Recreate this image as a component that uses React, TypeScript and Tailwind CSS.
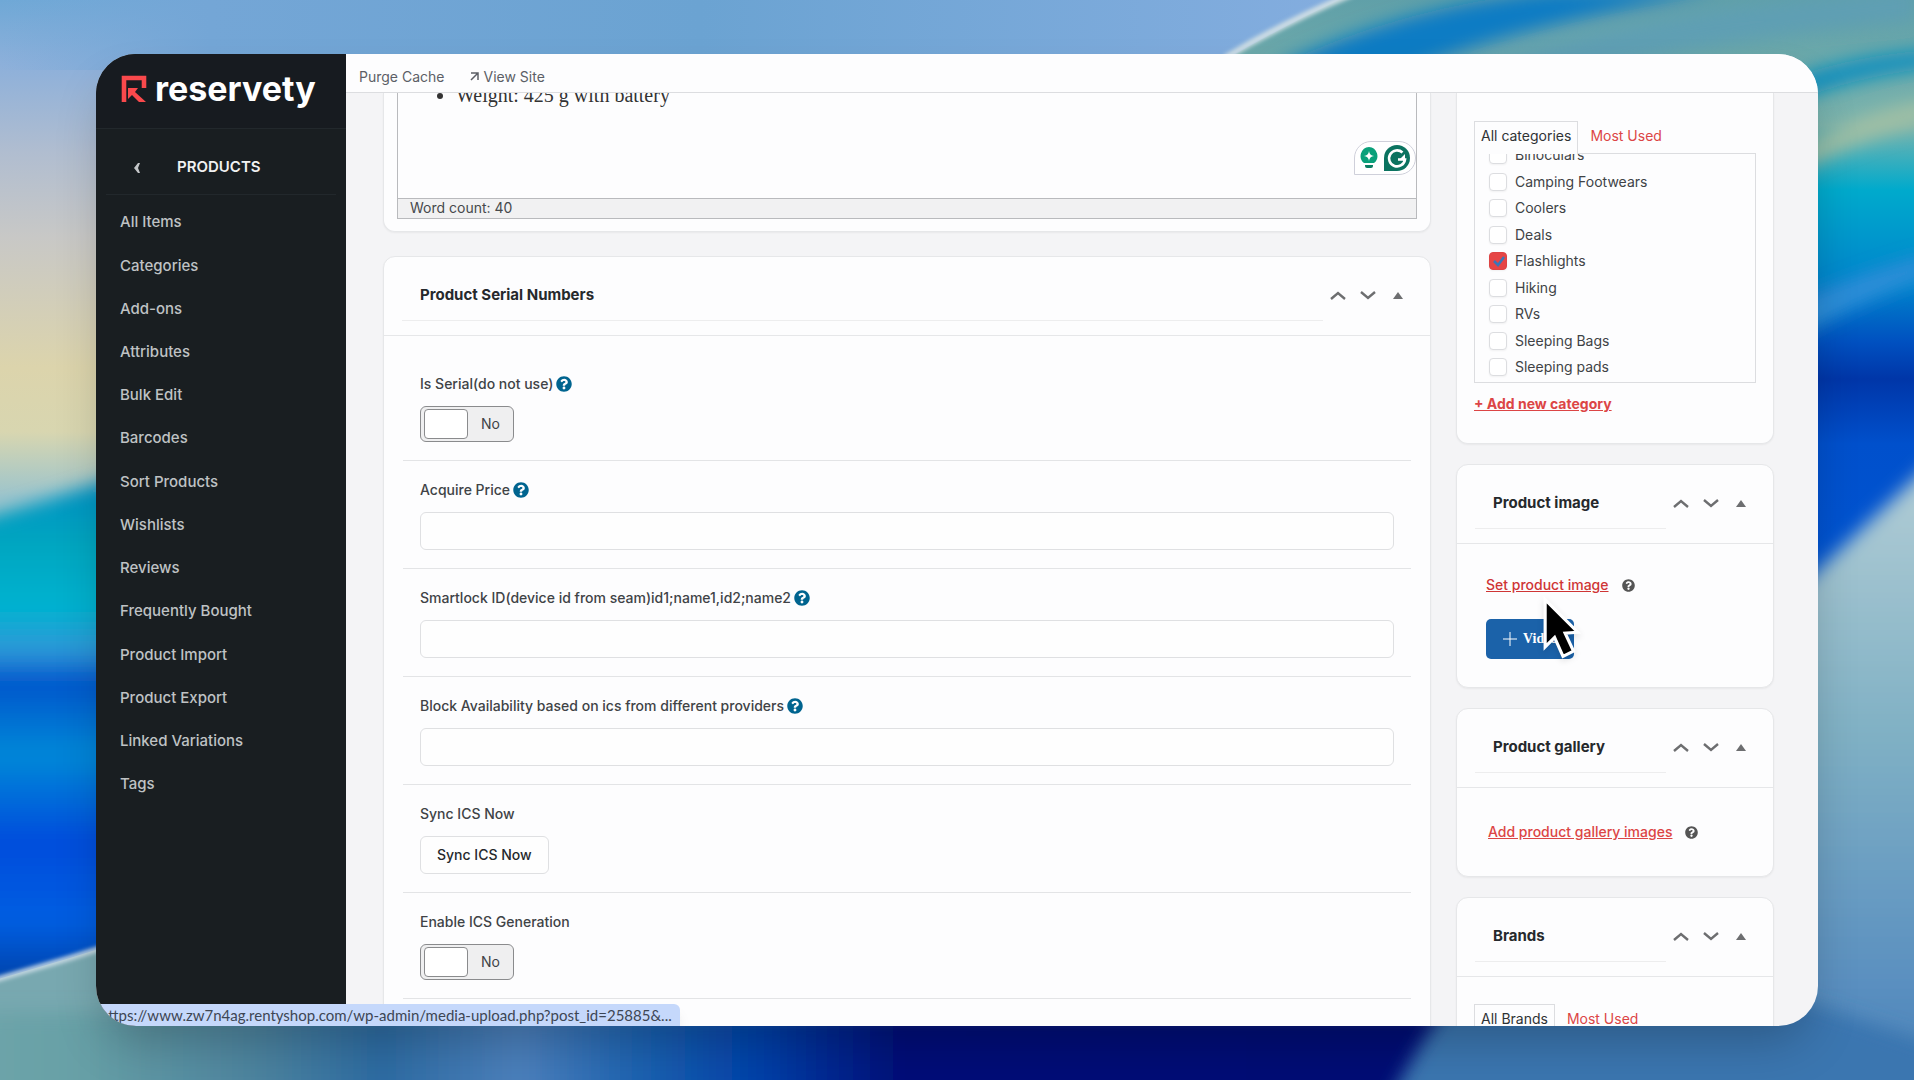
import { ReactNode } from "react";
import { FaQuestionCircle } from "react-icons/fa";

const menuItems = [
  "All Items",
  "Categories",
  "Add-ons",
  "Attributes",
  "Bulk Edit",
  "Barcodes",
  "Sort Products",
  "Wishlists",
  "Reviews",
  "Frequently Bought",
  "Product Import",
  "Product Export",
  "Linked Variations",
  "Tags",
];

const categories = [
  "Binoculars",
  "Camping Footwears",
  "Coolers",
  "Deals",
  "Flashlights",
  "Hiking",
  "RVs",
  "Sleeping Bags",
  "Sleeping pads",
];

const Wallpaper = () => (
  <svg
    className="absolute inset-0 h-full w-full"
    viewBox="0 0 1914 1080"
    preserveAspectRatio="none"
    aria-hidden="true"
  >
    <defs>
      <linearGradient id="sky" x1="0" y1="0" x2="0" y2="1">
        <stop offset="0" stopColor="#6fa8d6" />
        <stop offset="0.06" stopColor="#8db0da" />
        <stop offset="0.14" stopColor="#b0bdd0" />
        <stop offset="0.22" stopColor="#c8c8c6" />
        <stop offset="0.34" stopColor="#dcd4ac" />
        <stop offset="0.4" stopColor="#d8d6b0" />
        <stop offset="0.46" stopColor="#9cc4cc" />
      </linearGradient>
      <linearGradient id="topSky" x1="0" y1="0" x2="1" y2="0">
        <stop offset="0" stopColor="#77a8d8" stopOpacity="0" />
        <stop offset="0.15" stopColor="#74a6d6" />
        <stop offset="0.5" stopColor="#6ba3d2" />
        <stop offset="1" stopColor="#86aee0" />
      </linearGradient>
      <linearGradient id="leftWave" x1="0" y1="0" x2="0" y2="1">
        <stop offset="0" stopColor="#0a8cc4" />
        <stop offset="0.14" stopColor="#00a6c0" />
        <stop offset="0.26" stopColor="#00b2d0" />
        <stop offset="0.34" stopColor="#2f98d8" />
        <stop offset="0.4" stopColor="#0056cc" />
        <stop offset="0.54" stopColor="#0088d8" />
        <stop offset="0.7" stopColor="#004cdc" />
        <stop offset="0.85" stopColor="#005ee2" />
        <stop offset="1" stopColor="#003a98" />
      </linearGradient>
      <linearGradient id="bottom" x1="0" y1="0" x2="1" y2="0">
        <stop offset="0" stopColor="#6fa5aa" />
        <stop offset="0.06" stopColor="#67a0a6" />
        <stop offset="0.15" stopColor="#4c839f" />
        <stop offset="0.21" stopColor="#2c6ba2" />
        <stop offset="0.28" stopColor="#4c80bc" />
        <stop offset="0.34" stopColor="#1c62b0" />
        <stop offset="0.4" stopColor="#0040a8" />
        <stop offset="0.47" stopColor="#000f78" />
        <stop offset="1" stopColor="#001070" />
      </linearGradient>
      <linearGradient id="rightWave" x1="0" y1="0" x2="0" y2="1">
        <stop offset="0" stopColor="#5f9fa8" />
        <stop offset="0.18" stopColor="#79b3ad" />
        <stop offset="0.27" stopColor="#00aacc" />
        <stop offset="0.4" stopColor="#0084cc" />
        <stop offset="0.48" stopColor="#0050c0" />
        <stop offset="0.53" stopColor="#0036a8" />
        <stop offset="0.62" stopColor="#0050cc" />
        <stop offset="1" stopColor="#0058d8" />
      </linearGradient>
      <linearGradient id="rightLow" x1="0" y1="0" x2="0" y2="1">
        <stop offset="0" stopColor="#b4ced6" />
        <stop offset="0.4" stopColor="#7fb0c4" />
        <stop offset="0.75" stopColor="#5a8fc0" />
        <stop offset="1" stopColor="#3a76b0" />
      </linearGradient>
      <filter id="soft" x="-20%" y="-20%" width="140%" height="140%">
        <feGaussianBlur stdDeviation="9" />
      </filter>
      <filter id="edge" x="-5%" y="-5%" width="110%" height="110%">
        <feGaussianBlur stdDeviation="2" />
      </filter>
    </defs>

    <rect width="1914" height="1080" fill="url(#sky)" />
    <rect width="1400" height="70" fill="url(#topSky)" />
    <path d="M-40 525Q50 500 140 470V1000H-40Z" fill="url(#leftWave)" filter="url(#soft)" />
    <path d="M-20 984Q60 962 140 936V1100H-20Z" fill="#78a8b0" />
    <path d="M-20 984Q60 962 140 936" fill="none" stroke="#cbdce6" strokeWidth="5" filter="url(#edge)" />
    <rect x="-40" y="1012" width="2000" height="120" fill="url(#bottom)" filter="url(#soft)" />

    {/* right side folds */}
    <path d="M1225 60Q1290 22 1352 -6H1930V720H1700V60Z" fill="url(#rightWave)" />
    <g filter="url(#soft)">
      <path d="M1270 70Q1400 5 1560 -10H1720Q1500 30 1400 75Z" fill="#0b7cc4" />
      <path d="M1460 70Q1620 20 1760 5L1914 -10V20Q1700 40 1580 75Z" fill="#5f9fb4" />
      <path d="M1800 75Q1860 55 1930 50V68Q1850 78 1800 100Z" fill="#0b8fbe" />
      <path d="M1800 150Q1860 110 1930 100V122Q1860 138 1800 170Z" fill="#a0bfa4" />
      <path d="M1800 300Q1870 270 1930 255V275Q1860 300 1800 335Z" fill="#2f8ed8" />
    </g>
    <path d="M1225 58Q1285 22 1352 -6" fill="none" stroke="#d2e0e4" strokeWidth="6" filter="url(#edge)" />
    <path d="M1780 606Q1850 540 1940 455V1160H1780Z" fill="url(#rightLow)" filter="url(#soft)" />
    <path d="M1385 1110Q1415 1050 1450 1000H1800L1980 1060V1110Z" fill="#3a76b0" filter="url(#soft)" />
  </svg>
);

const Logo = () => (
  <div className="flex h-[75px] items-center gap-2 border-b border-[#22282c] bg-[#171b20] pb-1 pl-[25px]">
    <svg className="h-[28px] w-[26px]" viewBox="0 0 26 28" fill="none" aria-hidden="true">
      <path d="M3 27V3H23V13" stroke="#f9494c" strokeWidth="4.600" />
      <path d="M7 13H17L14 17L25 27H18L11 20L7 24Z" fill="#f9494c" />
    </svg>
    <span className="text-[34px] leading-8 font-bold text-white">reservety</span>
  </div>
);

const Sidebar = () => (
  <aside className="w-[250px] shrink-0 bg-[#191e21]">
    <Logo />
    <div className="mx-[10px] flex h-[66px] items-center border-b border-[#22282c] pt-3">
      <button type="button" aria-label="Back" className="ml-7 w-[43px] text-left text-[#c3c6c8]">
        <svg className="h-[10px] w-[7px]" viewBox="0 0 7 10" fill="currentColor" aria-hidden="true">
          <path d="M6 0H4L0 5L4 10H6L4 5Z" />
        </svg>
      </button>
      <span className="text-[15px] font-semibold text-[#f0f1f1]">PRODUCTS</span>
    </div>
    <nav className="mt-[6px] flex h-[605px] flex-col justify-between text-[15px] font-medium text-[#bfc2c4]">
      {menuItems.map((item) => (
        <a key={item} href="#" className="flex h-11 items-center pl-6">
          {item}
        </a>
      ))}
    </nav>
  </aside>
);

const Arrows = () => (
  <div className="flex w-[107px] shrink-0 items-center pb-[2px] pl-[7px] text-[#6d6e70]">
    <button type="button" aria-label="Move up" className="flex w-[30px] justify-start">
      <svg className="h-[9px] w-[16px]" viewBox="0 0 16 9" fill="none" stroke="currentColor" strokeWidth="2.4">
        <path d="M1 8L8 2L15 8" />
      </svg>
    </button>
    <button type="button" aria-label="Move down" className="flex w-[33px] justify-start">
      <svg className="h-[9px] w-[16px]" viewBox="0 0 16 9" fill="none" stroke="currentColor" strokeWidth="2.4">
        <path d="M1 1L8 7L15 1" />
      </svg>
    </button>
    <button type="button" aria-label="Toggle panel">
      <svg className="h-[7px] w-[10px]" viewBox="0 0 10 7" fill="currentColor">
        <path d="M5 0L10 7H0Z" />
      </svg>
    </button>
  </div>
);

const Card = ({ title, children }: { title: string; children: ReactNode }) => (
  <section className="rounded-xl border border-[#e6e7e9] bg-[#fdfdfe] shadow-xs">
    <div className="flex h-[79px] border-b border-[#e6e7e9]">
      <h2 className="mt-[14px] ml-[18px] flex h-[50px] flex-1 items-center border-b border-[#ededee] pb-px pl-[18px] text-[15px] font-bold text-[#26292c]">
        {title}
      </h2>
      <Arrows />
    </div>
    {children}
  </section>
);

const HelpTip = () => <FaQuestionCircle className="h-4 w-4 text-[#00648f]" aria-label="Help" />;

type RowProps = { label: string; id: string; help?: boolean; children: ReactNode };

const Row = ({ label, id, help, children }: RowProps) => (
  <div className="border-b border-[#e3e4e6] px-[17px] pt-[17px] pb-[18px]">
    <div className="mb-[10px] flex h-6 items-center gap-[3px] font-medium">
      <label htmlFor={id}>{label}</label>
      {help && <HelpTip />}
    </div>
    {children}
  </div>
);

const TextField = ({ id }: { id: string }) => (
  <input
    id={id}
    type="text"
    className="block h-[38px] w-full rounded-md border border-[#dfe0e2] bg-[#fefefe] px-3 outline-none"
  />
);

const Toggle = ({ id }: { id: string }) => (
  <label className="flex h-9 w-[94px] items-center rounded-md border border-[#8a8b8d] bg-[#efeff0] pl-[3px]">
    <input
      id={id}
      type="checkbox"
      className="h-[30px] w-[44px] appearance-none rounded-sm border border-[#8a8b8d] bg-white"
    />
    <span className="flex-1 text-center">No</span>
  </label>
);

const GrammarBadge = () => (
  <div className="absolute right-0 bottom-[43px] flex h-[34px] w-[62px] items-center justify-center gap-[6px] rounded-full rounded-bl-none border border-[#cfd0da] bg-white">
    <svg className="h-[22px] w-[18px]" viewBox="0 0 18 22" aria-hidden="true">
      <path d="M9 0A9 9 0 0 1 14 16H4A9 9 0 0 1 9 0Z" fill="#0aa07a" />
      <path d="M9 4Q9.500 8.500 14 9Q9.500 9.500 9 14Q8.500 9.500 4 9Q8.500 8.500 9 4Z" fill="#fff" />
      <path d="M5 18H13V19Q13 21 11 21H7Q5 21 5 19Z" fill="#0a7d62" />
    </svg>
    <svg className="h-[26px] w-[26px]" viewBox="0 0 26 26" aria-hidden="true">
      <path d="M0 26V13A13 13 0 1 1 13 26Z" fill="#0b7360" />
      <path d="M18.500 7.500A8 8 0 1 0 21 14.500H14" fill="none" stroke="#fff" strokeWidth="2.600" />
      <path d="M21 9V15H15Z" fill="#fff" />
    </svg>
  </div>
);

const Editor = () => (
  <section className="rounded-b-xl border border-t-0 border-[#e6e7e9] bg-[#fdfdfe] px-[13px] pb-3 shadow-xs">
    <div className="relative h-[126px] overflow-hidden border border-t-0 border-[#b9babd]">
      <ul className="-mt-[10px] h-[115px] list-disc pl-[58px] font-['Liberation_Serif',serif] text-[20px] leading-6 text-[#333]">
        <li>Weight: 425 g with battery</li>
      </ul>
      <div className="flex h-5 items-center border-t border-[#b9babd] bg-[#f1f1f2] px-3 pb-[2px] text-sm text-[#46494c]">
        Word count: 40
      </div>
      <GrammarBadge />
    </div>
  </section>
);

const CategoryItem = ({ name }: { name: string }) => (
  <li className="flex h-5">
    <label className="flex items-center gap-2">
      <span className="grid h-[18px] w-[18px]">
        <input
          type="checkbox"
          defaultChecked={name === "Flashlights"}
          className="peer col-start-1 row-start-1 appearance-none rounded-sm border border-[#dcdde0] bg-white shadow-xs checked:border-[#dd4444] checked:bg-[#e64545]"
        />
        <svg
          className="col-start-1 row-start-1 hidden h-[18px] w-[18px] peer-checked:block"
          viewBox="0 0 18 18"
          fill="none"
          stroke="#3a76b8"
          strokeWidth="2.5"
          aria-hidden="true"
        >
          <path d="M5 9L9 13L15 5" />
        </svg>
      </span>
      {name}
    </label>
  </li>
);

const Tabs = ({ first }: { first: string }) => (
  <div className="flex h-8 items-stretch">
    <a
      href="#"
      className="z-10 -mb-px flex items-center border border-b-0 border-[#dcdde0] bg-[#fdfdfe] px-[6px] pb-1 text-[#2f3235]"
    >
      {first}
    </a>
    <a href="#" className="flex items-center px-3 pb-[2px] text-[#dc4545]">
      Most Used
    </a>
  </div>
);

const Categories = () => (
  <section className="rounded-b-xl border border-t-0 border-[#e6e7e9] bg-[#fdfdfe] px-[17px] pt-7 pb-[29px] shadow-xs">
    <Tabs first="All categories" />
    <div className="h-[230px] overflow-hidden border border-[#dcdde0] pl-[14px]">
      <ul className="-mt-[9px] flex h-[232px] flex-col justify-between">
        {categories.map((name) => (
          <CategoryItem key={name} name={name} />
        ))}
      </ul>
    </div>
    <a href="#" className="mt-[11px] inline-block leading-5 font-bold text-[#dc4545] underline">
      + Add new category
    </a>
  </section>
);

const ProductImage = () => (
  <Card title="Product image">
    <div className="px-[29px] pt-[31px] pb-[28px]">
      <div className="flex h-5 items-center gap-[13px]">
        <a href="#" className="font-medium text-[#cf3535] underline">
          Set product image
        </a>
        <FaQuestionCircle className="h-[13px] w-[13px] text-[#555]" aria-label="Help" />
      </div>
      <div className="relative mt-6 w-fit">
        <button
          type="button"
          className="flex h-10 w-[88px] items-center gap-[6px] rounded-[5px] bg-[#1b62a9] pl-[17px] font-['Liberation_Serif',serif] text-sm font-bold text-white"
        >
          <svg className="h-[14px] w-[14px]" viewBox="0 0 14 14" stroke="currentColor" aria-hidden="true">
            <path d="M7 0V14M0 7H14" />
          </svg>
          Video
        </button>
        <svg
          className="absolute -top-6 left-[56px] h-[66px] w-[42px] drop-shadow-md"
          viewBox="0 0 40 62"
          aria-hidden="true"
        >
          <path
            d="M3 4L34 35L22 36L30 53L20 58L12 40L3 49Z"
            fill="#000"
            stroke="#fff"
            strokeWidth="3"
            strokeLinejoin="miter"
          />
        </svg>
      </div>
    </div>
  </Card>
);

const ProductGallery = () => (
  <Card title="Product gallery">
    <div className="flex h-[88px] items-center gap-[13px] px-[31px]">
      <a href="#" className="font-medium text-[#dc4545] underline">
        Add product gallery images
      </a>
      <FaQuestionCircle className="h-[13px] w-[13px] text-[#555]" aria-label="Help" />
    </div>
  </Card>
);

const Brands = () => (
  <Card title="Brands">
    <div className="h-[200px] px-[17px] pt-[27px]">
      <Tabs first="All Brands" />
    </div>
  </Card>
);

const SerialNumbers = () => (
  <Card title="Product Serial Numbers">
    <div className="px-[19px] pt-[19px] pb-10">
      <Row id="is-serial" label="Is Serial(do not use)" help>
        <Toggle id="is-serial" />
      </Row>
      <Row id="price" label="Acquire Price" help>
        <TextField id="price" />
      </Row>
      <Row id="smartlock" label="Smartlock ID(device id from seam)id1;name1,id2;name2" help>
        <TextField id="smartlock" />
      </Row>
      <Row id="block" label="Block Availability based on ics from different providers" help>
        <TextField id="block" />
      </Row>
      <Row id="sync" label="Sync ICS Now">
        <button
          id="sync"
          type="button"
          className="block h-[38px] rounded-md border border-[#dfe0e2] bg-[#fefefe] px-4 font-medium text-[#26292c]"
        >
          Sync ICS Now
        </button>
      </Row>
      <Row id="ics" label="Enable ICS Generation">
        <Toggle id="ics" />
      </Row>
    </div>
  </Card>
);

const TopBar = () => (
  <header className="flex h-[39px] shrink-0 items-center gap-[26px] border-b border-[#dcdde0] bg-[#fdfdfe] px-[13px] pt-[7px] text-sm text-[#5c5f66]">
    <a href="#">Purge Cache</a>
    <a href="#" className="flex items-center gap-1">
      <svg className="h-[9px] w-[9px]" viewBox="0 0 9 9" fill="none" stroke="currentColor" strokeWidth="1.5">
        <path d="M1 1H8V8M8 1L1 8" />
      </svg>
      View Site
    </a>
  </header>
);

const App = () => {
  return (
    <div className="relative h-screen overflow-hidden px-24 py-[54px] font-['Inter',sans-serif]">
      <Wallpaper />
      <div className="relative flex h-full overflow-hidden rounded-[40px] bg-[#f4f4f6] shadow-2xl">
        <Sidebar />
        <div className="flex min-w-0 flex-1 flex-col">
          <TopBar />
          <main className="flex min-h-0 flex-1 items-start gap-[25px] overflow-hidden pr-11 pl-[37px] text-sm text-[#404346]">
            <div className="flex min-w-0 flex-1 flex-col gap-6">
              <Editor />
              <SerialNumbers />
            </div>
            <div className="flex w-[318px] shrink-0 flex-col gap-5">
              <Categories />
              <ProductImage />
              <ProductGallery />
              <Brands />
            </div>
          </main>
        </div>
        <div className="absolute bottom-0 left-0 flex h-[22px] items-center rounded-tr-md bg-[#c5d8fb] pt-px pr-2 pl-1 font-['Lato',sans-serif] text-[15px] whitespace-nowrap text-[#3d4654] shadow-lg">
          https://www.zw7n4ag.rentyshop.com/wp-admin/media-upload.php?post_id=25885&amp;...
        </div>
      </div>
    </div>
  );
};

export default App;
